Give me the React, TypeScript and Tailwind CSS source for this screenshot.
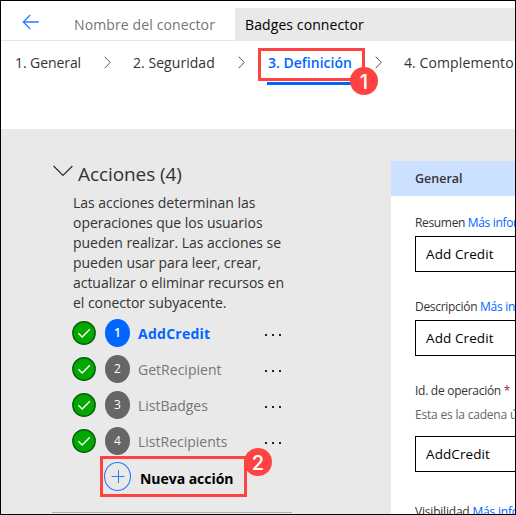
import type { ReactNode } from "react";

function Check() {
  return (
    <svg width="24" height="24" viewBox="0 0 24 24" className="block shrink-0">
      <circle cx="12" cy="12" r="11.2" fill="#00a800" stroke="#0b5e0b" strokeWidth="1.4" />
      <path d="M6.3 12.3l3.9 3.8 7.6-7.8" fill="none" stroke="#fff" strokeWidth="1.4" />
    </svg>
  );
}

function Chevron({ className }: { className: string }) {
  return (
    <svg width="7" height="13" viewBox="0 0 7 13" className={className}>
      <path d="M.7 .7L6.2 6.4.7 12.2" fill="none" stroke="#555" strokeWidth="1" />
    </svg>
  );
}

function Badge({ children, className }: { children: ReactNode; className: string }) {
  return (
    <span className={`absolute flex size-[28px] items-center justify-center rounded-full bg-[#ff4343] pt-px font-['Inter','Liberation_Sans',sans-serif] text-[20px] leading-none font-medium text-white ${className}`}>
      {children}
    </span>
  );
}

const actions = [
  { name: "AddCredit", track: "tracking-[0.25px]" },
  { name: "GetRecipient", track: "tracking-[0.02px]" },
  { name: "ListBadges", track: "tracking-[-0.02px]" },
  { name: "ListRecipients", track: "tracking-[0px]" },
];

const paragraph = [
  "Las acciones determinan las",
  "operaciones que los usuarios",
  "pueden realizar. Las acciones se",
  "pueden usar para leer, crear,",
  "actualizar o eliminar recursos en",
  "el conector subyacente.",
];

function Field({ value }: { value: string }) {
  return (
    <div className="flex h-9 w-[200px] shrink-0 items-center border border-black bg-white pt-px pl-2.5 text-[13.5px] tracking-[0.1px] text-black">
      {value}
    </div>
  );
}

export default function App() {
  return (
    <div className="flex h-[515px] w-[516px] flex-col overflow-hidden border border-black bg-white font-['Open_Sans','Noto_Sans',sans-serif] whitespace-nowrap text-[#333]">
      <header className="flex h-10 shrink-0 border-b border-[#e5e5e5]">
        <svg width="18" height="16" viewBox="0 0 18 16" className="mt-[13px] ml-[21px] shrink-0">
          <path d="M16.8 8H1.5M8.2 1L1.3 8l6.9 7" fill="none" stroke="#2b7bff" strokeWidth="1.3" />
        </svg>
        <div className="ml-[34px] w-[161px] shrink-0 pt-[14px] text-[14px] leading-[20px] tracking-[0.12px] text-[#767676]">Nombre del conector</div>
        <div className="mt-[7px] h-[33px] flex-1 bg-[#e9e9e9] pt-[7px] pl-[10px] text-[14px] leading-[20px] tracking-[0.1px] text-black">Badges connector</div>
      </header>

      <nav className="flex h-[88px] shrink-0 items-start pt-[7px] text-[14px] leading-[20px]">
        <div className="ml-[14px] w-[89px] shrink-0 pt-[5px] tracking-[-0.08px]">1. General</div>
        <Chevron className="mt-[8px] shrink-0" />
        <div className="ml-[22px] w-[105px] shrink-0 pt-[5px] tracking-[0.05px]">2. Seguridad</div>
        <Chevron className="mt-[8px] shrink-0" />
        <div className="relative ml-[13px] h-[37px] w-[107px] shrink-0">
          <div className="h-[33px] border-3 border-[#ff4343] pt-[2px] pl-[7px] font-semibold text-[#0066ff]">3. Definición</div>
          <div className="mt-[1px] ml-[9px] h-[3px] w-[87px] bg-[#0066ff]" />
          <Badge className="top-[19px] left-[92px]">1</Badge>
        </div>
        <Chevron className="mt-[8px] ml-[10px] shrink-0" />
        <div className="ml-[22px] pt-[5px] tracking-[0.1px]">4. Complemento</div>
      </nav>

      <main className="flex h-[385px] shrink-0 overflow-hidden bg-[#e9e9e9]">
        <aside className="w-[390px] shrink-0">
          <div className="mt-[33px] ml-[52px] flex h-6">
            <svg width="20" height="12" viewBox="0 0 20 12" className="mt-[3px] shrink-0">
              <path d="M.6 1L10 10.4 19.4 1" fill="none" stroke="#333" strokeWidth="1.3" />
            </svg>
            <h2 className="ml-[5px] text-[19px] leading-6 tracking-[-0.08px]">Acciones (4)</h2>
          </div>
          <div className="mt-[7px] ml-[72px] text-[14px] leading-[20px] tracking-[-0.04px]">
            {paragraph.map((line) => (
              <div key={line}>{line}</div>
            ))}
          </div>
          <ul className="mt-[2px]">
            {actions.map((a, i) => (
              <li key={a.name} className="flex h-9 items-center pl-[71px]">
                <Check />
                <span className={`ml-[9px] flex h-7 w-[25px] shrink-0 items-center justify-center rounded-[50%] pb-px text-[12px] text-white ${i === 0 ? "bg-[#0066ff] font-semibold" : "bg-[#666]"}`}>
                  {i + 1}
                </span>
                <span className={`ml-[8px] w-[127px] shrink-0 pt-px text-[14px] ${a.track} ${i === 0 ? "font-bold text-[#0066ff]" : "text-[#767676]"}`}>{a.name}</span>
                <span className="flex gap-[5px] pt-[3px]">
                  <i className="size-[2px] bg-[#222]" />
                  <i className="size-[2px] bg-[#222]" />
                  <i className="size-[2px] bg-[#222]" />
                </span>
              </li>
            ))}
          </ul>
          <div className="relative mt-[-3px] ml-[99px] flex h-[41px] w-[147px] items-center border-3 border-[#ff4343]">
            <svg width="27" height="29" viewBox="0 0 27 29" className="ml-px shrink-0">
              <ellipse cx="13.5" cy="14.5" rx="13" ry="14" fill="none" stroke="#2b7bff" strokeWidth="1.1" />
              <path d="M7.5 14.5h13M14.5 8v13" stroke="#2b7bff" strokeWidth="1" />
            </svg>
            <span className="ml-[9px] pt-[3px] text-[14px] font-bold tracking-[-0.04px] text-black">Nueva acción</span>
            <Badge className="top-[-11px] left-[141px]">2</Badge>
          </div>
          <div className="mt-[15px] ml-[51px] h-px w-[240px] bg-[#b0b0b0]" />
        </aside>

        <section className="mt-[32px] flex h-[360px] w-[240px] shrink-0 flex-col bg-white text-[12px]">
          <div className="flex h-[35px] shrink-0 items-center bg-[#cce0ff] pt-px pl-6 text-[12.5px] font-semibold">General</div>
          <div className="flex flex-col pl-6">
            <div className="mt-[18px] mb-[4px] h-[18px] leading-[18px] tracking-[-0.34px]">Resumen <span className="text-[#0066ff]">Más información</span></div>
            <Field value="Add Credit" />
            <div className="mt-[26px] mb-[4px] h-[18px] leading-[18px] tracking-[-0.3px]">Descripción <span className="text-[#0066ff]">Más información</span></div>
            <Field value="Add Credit" />
            <div className="mt-[26px] h-[18px] leading-[18px] tracking-[-0.28px]">Id. de operación <span className="text-[#a4262c]">*</span></div>
            <div className="mt-[6px] mb-[12px] h-[18px] leading-[18px] tracking-[-0.2px] text-[#666]">Esta es la cadena única</div>
            <Field value="AddCredit" />
            <div className="mt-[31px] h-[18px] leading-[18px] tracking-[-0.2px]">Visibilidad <span className="text-[#0066ff]">Más información</span></div>
          </div>
        </section>
      </main>
    </div>
  );
}
